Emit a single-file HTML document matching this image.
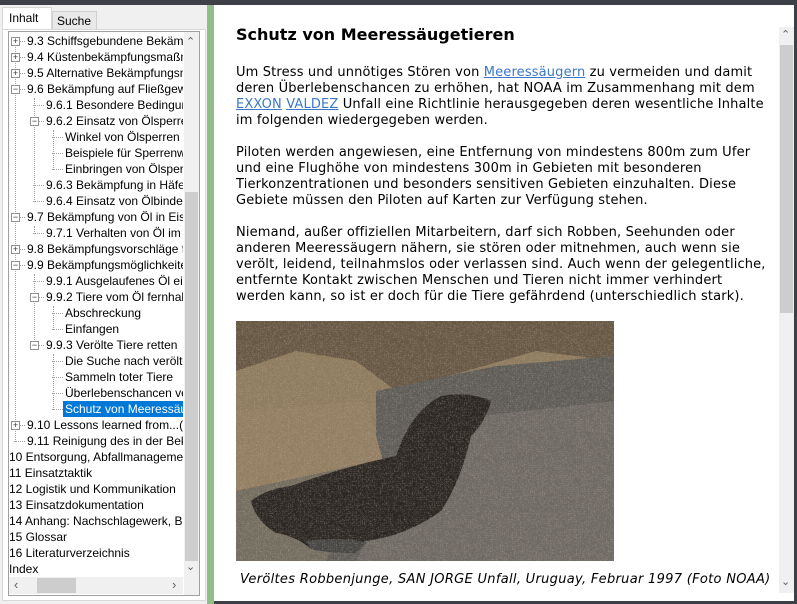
<!DOCTYPE html>
<html><head><meta charset="utf-8"><style>
*{margin:0;padding:0;box-sizing:border-box}
body{width:797px;height:604px;overflow:hidden;background:#f0f0f0;position:relative;font-family:"Liberation Sans",sans-serif}
.abs{position:absolute}
#top{left:0;top:0;width:797px;height:5px;background:#3d4047}
#tabs{left:0;top:5px;width:207px;height:25px;background:#f0f0f0}
.tab{position:absolute;font-size:12px;color:#000;line-height:18px}
#tree{left:8px;top:31px;width:192px;height:565px;background:#fff;border:1px solid #a0a0a0;overflow:hidden}
.r{position:absolute;font-size:12px;line-height:16px;white-space:nowrap;color:#000;height:16px}
.bx{position:absolute;width:9px;height:9px;border:1px solid #919191;background:#fff;font-size:9px;line-height:7px;text-align:center;color:#333}
.hd{position:absolute;height:1px;border-top:1px dotted #a0a0a0}
.vd{position:absolute;width:1px;border-left:1px dotted #a0a0a0}
#green{left:207px;top:5px;width:7px;height:599px;background:#8fbe88}
#main{left:214px;top:5px;width:580px;height:596px;background:#fff}
#edge{left:794px;top:0;width:3px;height:604px;background:#3d4047}
#bot{left:214px;top:601px;width:580px;height:3px;background:#3d4047}
.t{position:absolute;left:236px;font-family:"DejaVu Sans",Verdana,sans-serif;font-size:13px;letter-spacing:0.15px;line-height:16px;color:#000;white-space:nowrap}
a{color:#3b78c8;text-decoration:underline}
</style></head><body>
<div class="abs" id="top"></div>
<div class="abs" id="tabs">
 <div class="abs" style="left:2px;top:2px;width:50px;height:23px;background:#fff;border:1px solid #d9d9d9;border-bottom:none"></div>
 <div class="tab" style="left:9px;top:4px">Inhalt</div>
 <div class="abs" style="left:52px;top:6px;width:45px;height:19px;background:#e9e9e9;border:1px solid #d0d0d0;border-bottom:none"></div>
 <div class="tab" style="left:57px;top:7px">Suche</div>
</div>
<div class="abs" style="left:2px;top:29px;width:204px;height:572px;border:1px solid #d9d9d9;background:#fff"></div>
<div class="abs" id="tree">
 <div class="vd" style="left:6px;top:10px;height:400px"></div>
 <div class="vd" style="left:25px;top:66px;height:104px"></div>
 <div class="vd" style="left:44px;top:98px;height:40px"></div>
 <div class="vd" style="left:25px;top:242px;height:72px"></div>
 <div class="vd" style="left:44px;top:274px;height:24px"></div>
 <div class="vd" style="left:44px;top:322px;height:56px"></div>
 <div class="vd" style="left:25px;top:194px;height:8px"></div>
</div>
<div class="abs" id="rows" style="left:8px;top:31px;width:175px;height:546px;overflow:hidden">
</div>
<div class="abs" style="left:184px;top:32px;width:15px;height:563px;background:#f0f0f0"></div>
<div class="abs" style="left:185px;top:192px;width:13px;height:369px;background:#cdcdcd"></div>
<div class="abs" style="left:186px;top:35px;font-size:11px;color:#606060">&#8963;</div>
<div class="abs" style="left:186px;top:560px;font-size:11px;color:#606060">&#8964;</div>
<div class="abs" style="left:9px;top:577px;width:174px;height:17px;background:#f0f0f0"></div>
<div class="abs" style="left:37px;top:578px;width:39px;height:15px;background:#cdcdcd"></div>
<div class="abs" style="left:14px;top:577px;font-size:13px;color:#606060">&#8249;</div>
<div class="abs" style="left:172px;top:577px;font-size:13px;color:#606060">&#8250;</div>

<div class="abs" id="green"></div>
<div class="abs" id="main"></div>
<div class="abs" id="edge"></div>
<div class="abs" id="bot"></div>
<div class="abs" style="left:779px;top:27px;width:15px;height:566px;background:#f0f0f0"></div>
<div class="abs" style="left:780px;top:45px;width:13px;height:268px;background:#cdcdcd"></div>
<div class="abs" style="left:781px;top:28px;font-size:11px;color:#606060">&#8963;</div>
<div class="abs" style="left:781px;top:575px;font-size:11px;color:#606060">&#8964;</div>

<div class="abs" style="left:236px;top:25px;font-family:'DejaVu Sans',Verdana,sans-serif;font-weight:bold;font-size:16px;color:#000">Schutz von Meeressäugetieren</div>
<div class="t" style="top:65px">Um Stress und unnötiges Stören von <a>Meeressäugern</a> zu vermeiden und damit</div>
<div class="t" style="top:81px">deren Überlebenschancen zu erhöhen, hat NOAA im Zusammenhang mit dem</div>
<div class="t" style="top:97px"><a>EXXON</a> <a>VALDEZ</a> Unfall eine Richtlinie herausgegeben deren wesentliche Inhalte</div>
<div class="t" style="top:113px">im folgenden wiedergegeben werden.</div>
<div class="t" style="top:145px">Piloten werden angewiesen, eine Entfernung von mindestens 800m zum Ufer</div>
<div class="t" style="top:161px">und eine Flughöhe von mindestens 300m in Gebieten mit besonderen</div>
<div class="t" style="top:177px">Tierkonzentrationen und besonders sensitiven Gebieten einzuhalten. Diese</div>
<div class="t" style="top:193px">Gebiete müssen den Piloten auf Karten zur Verfügung stehen.</div>
<div class="t" style="top:225px">Niemand, außer offiziellen Mitarbeitern, darf sich Robben, Seehunden oder</div>
<div class="t" style="top:241px">anderen Meeressäugern nähern, sie stören oder mitnehmen, auch wenn sie</div>
<div class="t" style="top:257px">verölt, leidend, teilnahmslos oder verlassen sind. Auch wenn der gelegentliche,</div>
<div class="t" style="top:273px">entfernte Kontakt zwischen Menschen und Tieren nicht immer verhindert</div>
<div class="t" style="top:289px">werden kann, so ist er doch für die Tiere gefährdend (unterschiedlich stark).</div>

<svg class="abs" style="left:236px;top:321px" width="378" height="240" viewBox="0 0 378 240">
 <defs><filter id="n"><feTurbulence baseFrequency="0.5" numOctaves="3" seed="3"/><feColorMatrix values="0 0 0 0 0.55  0 0 0 0 0.5  0 0 0 0 0.42  0 0 0 0.5 0"/></filter></defs>
 <rect width="378" height="240" fill="#8a7556"/>
 <path d="M0 0H378V40L300 30 230 50 160 70 120 40 60 30 0 50Z" fill="#5e4e3a"/>
 <path d="M140 70 L260 45 L378 35 V240 H70 L140 180 Z" fill="#55534f"/>
 <path d="M200 100 L378 80 V240 H120 Z" fill="#66625c"/>
 <path d="M0 90 L130 80 L150 150 L0 170Z" fill="#8e785a"/>
 <path d="M0 170 L140 140 L90 240 H0Z" fill="#6b6558"/>
 <path d="M15 180 Q30 168 55 165 Q110 145 160 135 Q175 90 205 75 Q235 70 255 80 Q250 100 235 115 Q225 160 205 190 Q170 215 130 220 Q100 230 75 228 Q60 215 40 212 Q20 200 15 180Z" fill="#1c1814"/>
 <path d="M70 220 Q110 215 130 222 L120 232 Q90 232 75 228Z" fill="#3a3a3a"/>
 <rect width="378" height="240" filter="url(#n)"/>
</svg>
<div class="abs" style="left:240px;top:572px;font-family:'DejaVu Sans',Verdana,sans-serif;font-style:italic;font-size:13px;letter-spacing:0.3px;color:#000;white-space:nowrap">Veröltes Robbenjunge, SAN JORGE Unfall, Uruguay, Februar 1997 (Foto NOAA)</div>

<script>
var rows=[
[1,'9.3 Schiffsgebundene Bekämpfung','+'],[1,'9.4 Küstenbekämpfungsmaßnahmen','+'],[1,'9.5 Alternative Bekämpfungsmethoden','+'],[1,'9.6 Bekämpfung auf Fließgewässern','-'],
[2,'9.6.1 Besondere Bedingungen'],[2,'9.6.2 Einsatz von Ölsperren','-'],[3,'Winkel von Ölsperren zur'],[3,'Beispiele für Sperrenwinkel'],[3,'Einbringen von Ölsperren'],
[2,'9.6.3 Bekämpfung in Häfen'],[2,'9.6.4 Einsatz von Ölbindern'],[1,'9.7 Bekämpfung von Öl in Eis','-'],[2,'9.7.1 Verhalten von Öl im Eis'],
[1,'9.8 Bekämpfungsvorschläge für','+'],[1,'9.9 Bekämpfungsmöglichkeiten','-'],[2,'9.9.1 Ausgelaufenes Öl ein'],[2,'9.9.2 Tiere vom Öl fernhalten','-'],
[3,'Abschreckung'],[3,'Einfangen'],[2,'9.9.3 Verölte Tiere retten','-'],[3,'Die Suche nach verölten'],[3,'Sammeln toter Tiere'],[3,'Überlebenschancen verölter'],[3,'Schutz von Meeressäugetieren','s'],
[1,'9.10 Lessons learned from...(Erika)','+'],[1,'9.11 Reinigung des in der Bekämpfung'],
[0,'10 Entsorgung, Abfallmanagement'],[0,'11 Einsatztaktik'],[0,'12 Logistik und Kommunikation'],[0,'13 Einsatzdokumentation'],[0,'14 Anhang: Nachschlagewerk, Berichte'],[0,'15 Glossar'],[0,'16 Literaturverzeichnis'],[0,'Index']];
var c=document.getElementById('rows'),h='';
var tx=[1,19,38,57],bxx=[0,3,22,41];
rows.forEach(function(r,i){var y=2+i*16,l=r[0];
 if(l>0){var lx=bxx[l]+3;h+='<div class="hd" style="left:'+lx+'px;top:'+(y+8)+'px;width:'+(tx[l]-lx-2)+'px"></div>';}
 if(r[2]=='+'||r[2]=='-')h+='<div class="bx" style="left:'+bxx[l]+'px;top:'+(y+4)+'px">'+(r[2]=='+'?'+':'&minus;')+'</div>';
 var st=r[2]=='s'?'background:#0078d7;color:#fff;padding:0 2px;':'';
 h+='<div class="r" style="left:'+(tx[l]-(r[2]=='s'?2:0))+'px;top:'+y+'px;'+st+'">'+r[1]+'</div>';});
c.innerHTML=h;
</script>
</body></html>
